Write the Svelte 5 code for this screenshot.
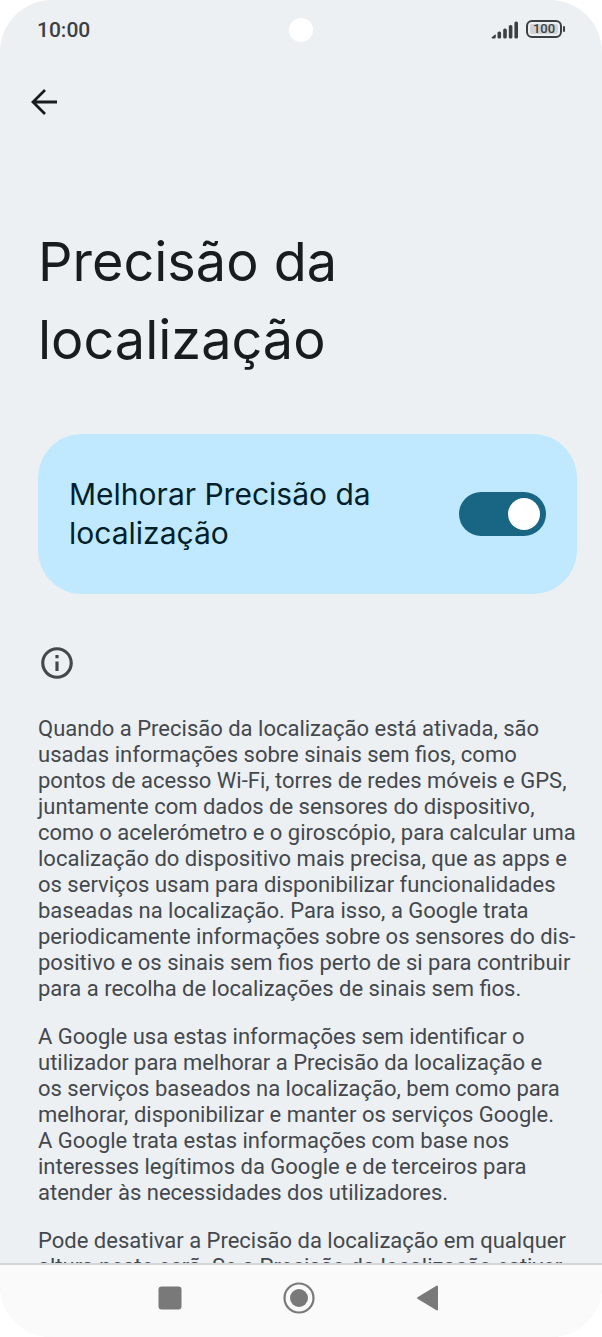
<script>
  let enabled = $state(true);

  // \u00ad marks a possible hyphenation point, \u00a0 keeps short words together
  const paragraphs = [
    'Quando a Precisão da localização está ativada, são usadas informações sobre sinais sem fios, como pontos de acesso Wi-Fi, torres de redes móveis e GPS, juntamente com dados de sensores do dispositivo, como o acelerómetro e o giroscópio, para calcular uma localização do dispositivo mais precisa, que as apps e os\u00a0serviços usam para disponibilizar funcionalidades baseadas na localização. Para isso, a Google trata periodicamente informações sobre os sensores do dis\u00adpositivo e os sinais sem fios perto de si para contribuir para a recolha de localizações de sinais sem fios.',
    'A Google usa estas informações sem identificar o utilizador para melhorar a Precisão da localização e os\u00a0serviços baseados na localização, bem como para melhorar, disponibilizar e manter os serviços Google. A\u00a0Google trata estas informações com base nos interesses legítimos da Google e de terceiros para atender às necessidades dos utilizadores.',
    'Pode desativar a Precisão da localização em qualquer altura neste ecrã. Se a Precisão da localização estiver'
  ];
</script>

<div class="phone">
  <header class="status">
    <time>10:00</time>
    <span class="camera"></span>
    <div class="indicators">
      <svg width="28" height="20" viewBox="0 0 28 20" aria-label="Rede">
        <g fill="#3d4043">
          <path d="M0.500 17.500L4 14.500Q4.800 14.200 4.800 15V17Q4.800 18.500 3.300 18.500H1.500Q0.500 18.500 0.500 17.500Z" />
          <rect x="6.500" y="11.500" width="3.600" height="7" rx="1.500" />
          <rect x="12.200" y="8.500" width="3.600" height="10" rx="1.500" />
          <rect x="17.800" y="5" width="3.600" height="13.500" rx="1.500" />
          <rect x="23.400" y="1.500" width="3.600" height="17" rx="1.500" />
        </g>
      </svg>
      <span class="battery">100</span>
    </div>
  </header>

  <main>
    <button class="back" aria-label="Voltar">
      <svg width="28" height="28" viewBox="0 0 28 28" fill="none" stroke="#191c1f" stroke-width="2.8">
        <path d="M27 14H3M15 2L3 14L15 26" />
      </svg>
    </button>

    <h1>Precisão da localização</h1>

    <label class="card">
      <span class="card-text">Melhorar Precisão da localização</span>
      <input type="checkbox" role="switch" bind:checked={enabled} />
    </label>

    <svg class="info" width="38" height="38" viewBox="0 0 24 24" fill="#44484c" aria-hidden="true">
      <path d="M11 7h2v2h-2zm0 4h2v6h-2zm1-9C6.480 2 2 6.480 2 12s4.480 10 10 10 10-4.480 10-10S17.520 2 12 2zm0 18c-4.410 0-8-3.590-8-8s3.590-8 8-8 8 3.590 8 8-3.590 8-8 8z" />
    </svg>

    <div class="description">
      {#each paragraphs as text}
        <p>{text}</p>
      {/each}
    </div>
  </main>

  <nav>
    <button aria-label="Recentes">
      <svg width="32" height="32" viewBox="0 0 32 32"><rect x="4.500" y="4.500" width="23" height="23" rx="3" fill="#797979" /></svg>
    </button>
    <button aria-label="Início">
      <svg width="32" height="32" viewBox="0 0 32 32">
        <circle cx="16" cy="16" r="14.500" fill="none" stroke="#797979" stroke-width="2.200" />
        <circle cx="16" cy="16" r="9" fill="#797979" />
      </svg>
    </button>
    <button aria-label="Anterior">
      <svg width="32" height="32" viewBox="0 0 32 32">
        <path d="M6 16L25 4.500V27.500Z" fill="#797979" stroke="#797979" stroke-width="2" stroke-linejoin="round" />
      </svg>
    </button>
  </nav>
</div>

<style>
  :global(body) {
    margin: 0;
    background: #fff;
  }

  .phone {
    display: flex;
    flex-direction: column;
    height: 100vh;
    overflow: hidden;
    border-radius: 52px;
    background: #ecf0f3;
    color: #191c1f;
    font-family: Roboto, "Liberation Sans", sans-serif;
  }

  .status {
    display: grid;
    grid-template-columns: 1fr auto 1fr;
    align-items: center;
    flex-shrink: 0;
    height: 60px;
    padding: 0 37px;
    color: #3d4043;
  }

  time {
    font-size: 21px;
    font-weight: 500;
    line-height: 24px;
  }

  .camera {
    width: 24px;
    height: 24px;
    border-radius: 50%;
    background: #fff;
  }

  .indicators {
    display: flex;
    justify-content: flex-end;
    align-items: center;
    gap: 7px;
  }

  .battery {
    position: relative;
    width: 32px;
    margin: 0 3px 2px 0;
    border: 2px solid #3d4043;
    border-radius: 6px;
    background: #d0d3d6;
    box-shadow: inset 0 0 0 2px #ecf0f3;
    font-size: 13px;
    font-weight: 500;
    line-height: 14px;
    text-align: center;
  }

  .battery::after {
    content: "";
    position: absolute;
    top: 4px;
    right: -5px;
    width: 2px;
    height: 6px;
    border-radius: 1px;
    background: #3d4043;
  }

  main {
    flex: 1;
    min-height: 0;
    overflow-y: auto;
    scrollbar-width: none;
    padding: 28px 25px 0 38px;
  }

  button {
    display: block;
    padding: 0;
    border: 0;
    background: none;
    cursor: pointer;
  }

  button svg {
    display: block;
  }

  .back {
    margin-left: -8px;
  }

  h1 {
    max-width: 400px;
    margin: 107px 0 0;
    font-family: Inter, sans-serif;
    font-size: 54px;
    font-weight: 400;
    line-height: 78px;
  }

  .card {
    display: flex;
    justify-content: space-between;
    align-items: center;
    gap: 24px;
    margin-top: 55px;
    padding: 41px 31px;
    border-radius: 44px;
    background: #c0e8ff;
    color: #001f2b;
    cursor: pointer;
  }

  .card-text {
    max-width: 320px;
    font-family: Inter, sans-serif;
    font-size: 30px;
    line-height: 39px;
  }

  input {
    appearance: none;
    flex-shrink: 0;
    box-sizing: border-box;
    width: 87px;
    height: 44px;
    margin: 0;
    padding: 6px;
    border-radius: 22px;
    background: #73777b;
    cursor: pointer;
  }

  input::before {
    content: "";
    display: block;
    width: 32px;
    height: 32px;
    border-radius: 50%;
    background: #fff;
  }

  input:checked {
    background: #186684;
  }

  input:checked::before {
    margin-left: auto;
  }

  .info {
    display: block;
    margin-top: 50px;
  }

  .description {
    margin-top: 34px;
    color: #44484c;
    font-size: 22px;
    line-height: 26px;
  }

  p {
    margin: 0 0 22px;
  }

  nav {
    display: flex;
    justify-content: center;
    align-items: center;
    gap: 97px;
    flex-shrink: 0;
    height: 74px;
    padding: 0 5px 7px 0;
    box-sizing: border-box;
    border-top: 2px solid #d3d6d9;
    background: #fafafa;
  }
</style>
